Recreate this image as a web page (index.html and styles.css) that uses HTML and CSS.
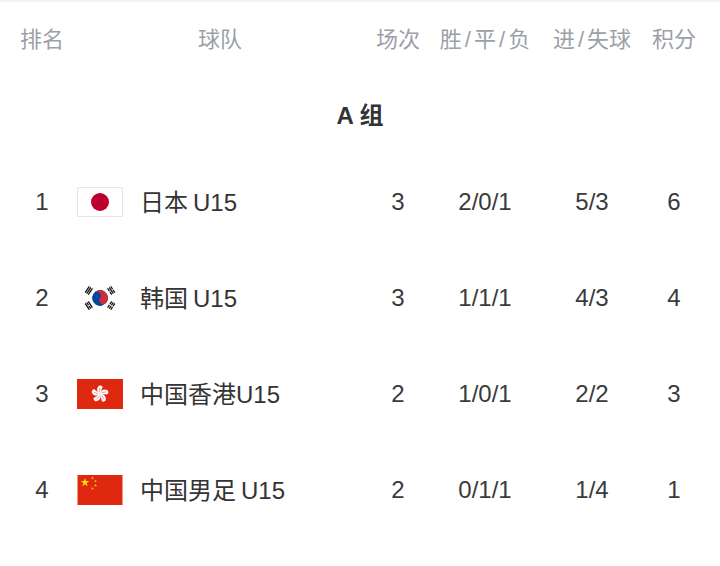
FILE: index.html
```html
<!DOCTYPE html>
<html lang="zh">
<head>
<meta charset="utf-8">
<link rel="stylesheet" href="styles.css">
</head>
<body>
<div class="table">
  <div class="row head">
    <div class="c rank">排名</div>
    <div class="c team-h">球队</div>
    <div class="c">场次</div>
    <div class="c">胜<span class="sl">/</span>平<span class="sl">/</span>负</div>
    <div class="c">进<span class="sl">/</span>失球</div>
    <div class="c">积分</div>
  </div>
  <div class="group">A 组</div>

  <div class="row body">
    <div class="c rank">1</div>
    <div class="team">
      <svg class="flag" viewBox="0 0 46 30"><rect x="0.5" y="0.5" width="45" height="29" fill="#fff" stroke="#e6e6e6"/><circle cx="23" cy="15" r="9" fill="#bc002d"/></svg>
      <span class="name">日本<span class="u">U15</span></span>
    </div>
    <div class="c">3</div>
    <div class="c">2/0/1</div>
    <div class="c">5/3</div>
    <div class="c">6</div>
  </div>

  <div class="row body">
    <div class="c rank">2</div>
    <div class="team">
      <svg class="flag" viewBox="0 0 36 24">
        <defs>
          <g id="bar"><rect x="-3" y="-0.5" width="6" height="1"/></g>
          <g id="brk"><rect x="-3" y="-0.5" width="2.7" height="1"/><rect x="0.3" y="-0.5" width="2.7" height="1"/></g>
        </defs>
        <rect width="36" height="24" fill="#fff"/>
        <g transform="translate(18 12) rotate(33.7)">
          <circle r="6.3" fill="#0047a0"/>
          <path d="M-6.3 0 A6.3 6.3 0 0 1 6.3 0 A3.15 3.15 0 0 1 0 0 A3.15 3.15 0 0 0 -6.3 0 Z" fill="#cd2e3a"/>
        </g>
        <g fill="#111">
          <g transform="translate(18 12) rotate(-56.3) translate(0 -10.8)"><use href="#bar" y="-1.5"/><use href="#bar"/><use href="#bar" y="1.5"/></g>
          <g transform="translate(18 12) rotate(56.3) translate(0 -10.8)"><use href="#brk" y="-1.5"/><use href="#bar"/><use href="#brk" y="1.5"/></g>
          <g transform="translate(18 12) rotate(-123.7) translate(0 -10.8)"><use href="#bar" y="-1.5"/><use href="#brk"/><use href="#bar" y="1.5"/></g>
          <g transform="translate(18 12) rotate(123.7) translate(0 -10.8)"><use href="#brk" y="-1.5"/><use href="#brk"/><use href="#brk" y="1.5"/></g>
        </g>
      </svg>
      <span class="name">韩国<span class="u">U15</span></span>
    </div>
    <div class="c">3</div>
    <div class="c">1/1/1</div>
    <div class="c">4/3</div>
    <div class="c">4</div>
  </div>

  <div class="row body">
    <div class="c rank">3</div>
    <div class="team">
      <svg class="flag" viewBox="0 0 46 30">
        <rect width="46" height="30" fill="#de2910"/>
        <g transform="translate(23 15) scale(1.1)" fill="#fff">
          <g id="petal"><path d="M0 0 C-3.2 -1.5 -3.6 -5.5 -0.8 -7.6 C0.6 -8.2 2.6 -7.6 2.4 -5.8 C1.2 -4.6 1.2 -2.2 0 0 Z"/><path d="M-0.6 -2 L-0.2 -5.6" stroke="#de2910" stroke-width="0.4" fill="none"/></g>
          <use href="#petal" transform="rotate(72)"/>
          <use href="#petal" transform="rotate(144)"/>
          <use href="#petal" transform="rotate(216)"/>
          <use href="#petal" transform="rotate(288)"/>
        </g>
      </svg>
      <span class="name">中国香港U15</span>
    </div>
    <div class="c">2</div>
    <div class="c">1/0/1</div>
    <div class="c">2/2</div>
    <div class="c">3</div>
  </div>

  <div class="row body">
    <div class="c rank">4</div>
    <div class="team">
      <svg class="flag" viewBox="0 0 30 20">
        <defs><polygon id="star" points="0,-1 0.2245,-0.309 0.951,-0.309 0.363,0.118 0.588,0.809 0,0.382 -0.588,0.809 -0.363,0.118 -0.951,-0.309 -0.2245,-0.309"/></defs>
        <rect width="30" height="20" fill="#de2910"/>
        <g fill="#ffde00">
          <use href="#star" transform="translate(5 5) scale(3)"/>
          <use href="#star" transform="translate(10 2) rotate(23) scale(1)"/>
          <use href="#star" transform="translate(12 4) rotate(45) scale(1)"/>
          <use href="#star" transform="translate(12 7) rotate(70) scale(1)"/>
          <use href="#star" transform="translate(10 9) rotate(21) scale(1)"/>
        </g>
      </svg>
      <span class="name">中国男足<span class="u">U15</span></span>
    </div>
    <div class="c">2</div>
    <div class="c">0/1/1</div>
    <div class="c">1/4</div>
    <div class="c">1</div>
  </div>
</div>
</body>
</html>
```
FILE: styles.css
```css
html, body {
  margin: 0;
  padding: 0;
  background: #fff;
}
body {
  font-family: "Liberation Sans", "Noto Sans CJK SC", sans-serif;
  border-top: 2px solid #f3f3f3;
  box-sizing: border-box;
  height: 566px;
}
.table {
  width: 720px;
}
.row {
  display: grid;
  grid-template-columns: 77px 286px 70px 104px 110px 54px;
  align-items: center;
}
.row.head {
  height: 70px;
  color: #9c9fa8;
  font-size: 22px;
  font-family: "Noto Sans CJK SC", sans-serif;
}
.row.body {
  height: 96px;
  color: #3a3a3a;
  font-size: 24px;
}
.c {
  text-align: center;
  white-space: nowrap;
}
.rank {
  padding-left: 7px;
}
.sl {
  padding: 0 3px;
  font-family: "Liberation Sans", sans-serif;
}
.group {
  height: 82px;
  display: flex;
  align-items: center;
  justify-content: center;
  font-size: 24px;
  font-weight: bold;
  color: #333;
}
.team {
  display: flex;
  align-items: center;
  gap: 17px;
  font-size: 24px;
  color: #333;
  white-space: nowrap;
}
.name {
  margin-top: -4px;
}
.u {
  margin-left: 5px;
}
.flag {
  width: 46px;
  height: 30px;
  display: block;
  flex: none;
}
```
